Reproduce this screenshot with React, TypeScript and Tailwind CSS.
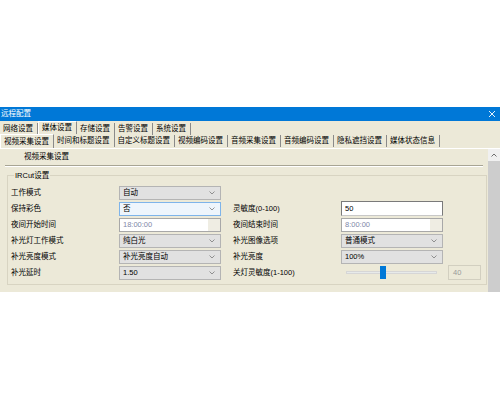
import React from "react";

const row1 = ["网络设置", "媒体设置", "存储设置", "告警设置", "系统设置"];
const row2 = [
  "视频采集设置",
  "时间和标题设置",
  "自定义标题设置",
  "视频编码设置",
  "音频采集设置",
  "音频编码设置",
  "隐私遮挡设置",
  "媒体状态信息",
];

function Chevron() {
  return (
    <svg width="6" height="4" viewBox="0 0 6 4" className="shrink-0">
      <path d="M0.5 0.5 L3 3 L5.5 0.5" fill="none" stroke="#7a7a7a" strokeWidth="0.8" />
    </svg>
  );
}

function Select({ value, focused }: { value: string; focused?: boolean }) {
  return (
    <div
      className={
        focused
          ? "flex h-[14px] w-[102px] items-center justify-between border border-[#7eb4ea] bg-[#eef5fc] pl-[3px] pr-[5px]"
          : "flex h-[14px] w-[102px] items-center justify-between border border-[#b4b4b4] bg-[#e1e1e1] pl-[3px] pr-[5px]"
      }
    >
      <span className="leading-none">{value}</span>
      <Chevron />
    </div>
  );
}

function TextInput({ value }: { value: string }) {
  return (
    <div className="flex h-[15px] w-[102px] items-center border border-[#7a7a7a] border-b-[#c8c8c8] bg-white pl-[3px]">
      <span className="leading-none">{value}</span>
    </div>
  );
}

function TimeInput({ value }: { value: string }) {
  return (
    <div className="flex h-[14px] w-[102px] border border-[#a8a8a8] bg-white">
      <span className="flex flex-1 items-center pl-[3px] leading-none text-[#8088a8]">{value}</span>
      <span className="w-[12px] bg-[#efede3]" />
    </div>
  );
}

function Row({ label, children, rlabel, right }: { label: string; children?: React.ReactNode; rlabel?: string; right?: React.ReactNode }) {
  return (
    <div className="flex h-[14px] items-center">
      <span className="w-[108px] leading-none">{label}</span>
      <div className="w-[102px]">{children}</div>
      <span className="ml-[12px] w-[108px] leading-none">{rlabel}</span>
      <div>{right}</div>
    </div>
  );
}

export default function App() {
  return (
    <div className="flex h-[400px] w-[500px] flex-col bg-white font-['Liberation_Sans','Noto_Sans_CJK_SC',sans-serif] text-[7.5px] text-black">
      <div className="h-[107px]" />
      {/* title bar */}
      <div className="flex h-[14px] items-center justify-between bg-[#0078d7] pl-[1px] pr-[4px] text-white">
        <span className="leading-none">远程配置</span>
        <svg width="8" height="8" viewBox="0 0 8 8">
          <path d="M1 1 L7 7 M7 1 L1 7" stroke="#ffffff" strokeWidth="0.9" />
        </svg>
      </div>

      <div className="flex h-[171px] flex-col bg-[#ece9d8]">
        {/* tab row 1 */}
        <div className="flex h-[14px] items-end">
          {row1.map((t, i) =>
            i === 1 ? (
              <div
                key={t}
                className="mb-[1px] flex h-[13px] items-center border-l border-t border-r border-l-white border-t-white border-r-[#8a8a8a] pl-[3px] pr-[4px] leading-none"
              >
                {t}
              </div>
            ) : (
              <div key={t} className="flex h-[12px] items-center border-r border-[#8a8a8a] pl-[3px] pr-[4px] leading-none">
                {t}
              </div>
            )
          )}
        </div>
        {/* tab row 2 */}
        <div className="flex h-[14px] items-end border-b border-white">
          {row2.map((t, i) =>
            i === 0 ? (
              <div
                key={t}
                className="flex h-[14px] items-center border-l border-t border-r border-l-white border-t-white border-r-[#8a8a8a] pl-[3px] pr-[4px] leading-none"
              >
                {t}
              </div>
            ) : (
              <div key={t} className="mb-[1px] flex h-[12px] items-center border-r border-[#8a8a8a] pl-[3px] pr-[4px] leading-none">
                {t}
              </div>
            )
          )}
        </div>

        {/* scroll area */}
        <div className="flex flex-1">
          <div className="flex flex-1 flex-col">
            <div className="flex h-[16px] items-center pl-[24px] leading-none">视频采集设置</div>
            <div className="mx-[5px] border-t border-b border-t-[#a8a594] border-b-white" />
            <fieldset className="ml-[7px] mt-[5px] h-[113px] w-[480px] border border-[#d8d4c2] pl-[3px] pt-[6px]">
              <legend className="ml-[3px] px-[1px] leading-none">IRCut设置</legend>
              <div className="flex flex-col gap-[2px]">
                <Row label="工作模式">
                  <Select value="自动" />
                </Row>
                <Row label="保持彩色" rlabel="灵敏度(0-100)" right={<TextInput value="50" />}>
                  <Select value="否" focused />
                </Row>
                <Row label="夜间开始时间" rlabel="夜间结束时间" right={<TimeInput value="8:00:00" />}>
                  <TimeInput value="18:00:00" />
                </Row>
                <Row label="补光灯工作模式" rlabel="补光图像选项" right={<Select value="普通模式" />}>
                  <Select value="纯白光" />
                </Row>
                <Row label="补光亮度模式" rlabel="补光亮度" right={<Select value="100%" />}>
                  <Select value="补光亮度自动" />
                </Row>
                <Row
                  label="补光延时"
                  rlabel="关灯灵敏度(1-100)"
                  right={
                    <div className="flex items-center">
                      <div className="relative ml-[5px] h-[3px] w-[91px] border border-[#d6d6d6] bg-[#e7eaea]">
                        <div className="absolute left-[33px] top-[-6px] h-[13px] w-[6px] bg-[#0078d7]" />
                      </div>
                      <div className="ml-[11px] flex h-[15px] w-[33px] items-center border border-[#d2cfc0] pl-[4px] text-[#9a9a9a]">
                        40
                      </div>
                    </div>
                  }
                >
                  <Select value="1.50" />
                </Row>
              </div>
            </fieldset>
          </div>
          {/* scrollbar */}
          <div className="flex w-[12px] flex-col">
            <div className="flex h-[12px] items-center justify-center bg-[#f0f0f0]">
              <svg width="6" height="4" viewBox="0 0 6 4">
                <path d="M0.5 3.5 L3 1 L5.5 3.5" fill="none" stroke="#606060" strokeWidth="0.9" />
              </svg>
            </div>
            <div className="flex-1 bg-[#cdcdcd]" />
          </div>
        </div>
      </div>
    </div>
  );
}
